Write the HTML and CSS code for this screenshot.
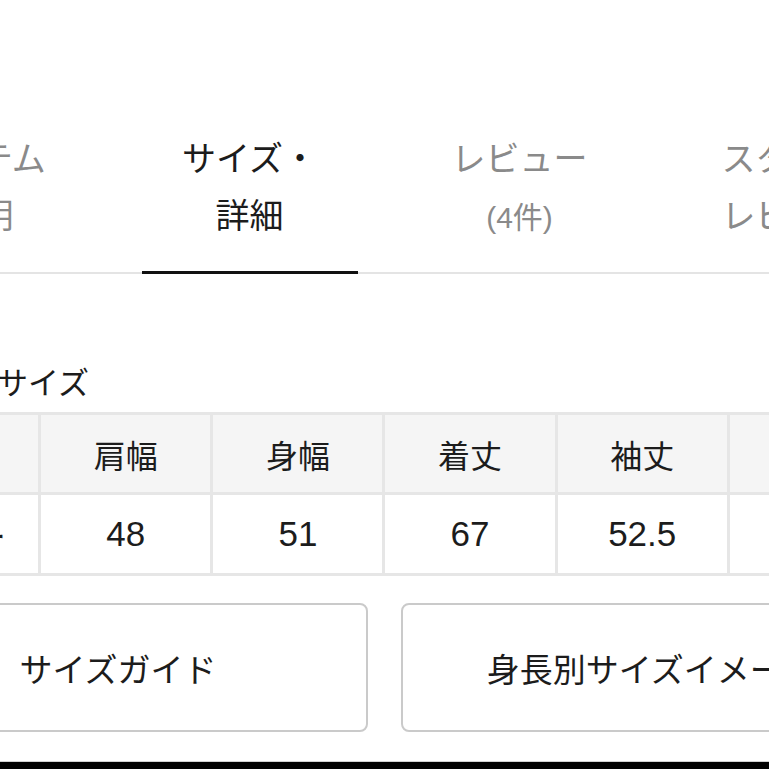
FILE: index.html
```html
<!DOCTYPE html>
<html lang="ja">
<head>
<meta charset="utf-8">
<link rel="stylesheet" href="styles.css">
</head>
<body>
<div class="page">
  <nav class="tabs">
    <div class="tab">アイテム<br>説明</div>
    <div class="tab active">サイズ・<br>詳細</div>
    <div class="tab">レビュー<br><span class="count">(4件)</span></div>
    <div class="tab">スタッフ<br>レビュー</div>
  </nav>
  <main class="content">
    <h2 class="heading">アイテムサイズ</h2>
    <table class="size-table">
      <thead>
        <tr><th>サイズ</th><th>肩幅</th><th>身幅</th><th>着丈</th><th>袖丈</th><th>裄丈</th></tr>
      </thead>
      <tbody>
        <tr><td>フリー</td><td>48</td><td>51</td><td>67</td><td>52.5</td><td>76</td></tr>
      </tbody>
    </table>
    <div class="buttons">
      <a class="btn">サイズガイド</a>
      <a class="btn">身長別サイズイメージ</a>
    </div>
  </main>
  <div class="bottom-bar"></div>
</div>
</body>
</html>
```

FILE: styles.css
```css
html, body {
  margin: 0;
  padding: 0;
  background: #ffffff;
}
body {
  width: 769px;
  height: 769px;
  overflow: hidden;
  font-family: "Liberation Sans", "Noto Sans CJK JP", sans-serif;
  color: #1c1c1c;
}
.page {
  width: 769px;
  display: flex;
  flex-direction: column;
  align-items: center;
}
.tabs {
  display: flex;
  flex: 0 0 auto;
  width: 1080px;
  margin: 0 -156px;
  border-bottom: 2px solid #e4e4e4;
}
.tab {
  flex: 0 0 216px;
  margin: 0 27px -2px;
  padding: 131px 0 25px;
  text-align: center;
  font-size: 34px;
  line-height: 57px;
  color: #8a8a8a;
  border-bottom: 3px solid transparent;
  white-space: nowrap;
}
.tab.active {
  color: #1c1c1c;
  border-bottom-color: #111111;
}
.count {
  font-size: 30px;
}
.content {
  flex: 0 0 auto;
  width: 1033px;
  margin: 0 -132px;
}
.heading {
  margin: 90px 0 8px;
  padding-left: 8px;
  font-size: 31px;
  line-height: 40px;
  font-weight: normal;
  color: #1c1c1c;
}
.size-table {
  width: 1036px;
  margin-left: -2px;
  table-layout: fixed;
  border-collapse: collapse;
}
.size-table th,
.size-table td {
  border: 3px solid #e6e6e6;
  text-align: center;
  font-weight: normal;
  color: #1c1c1c;
  padding: 0;
}
.size-table th {
  height: 77px;
  font-size: 32px;
  background: #f5f5f5;
}
.size-table td {
  height: 78px;
  font-size: 35px;
  background: #ffffff;
}
.buttons {
  display: flex;
  gap: 33px;
  margin-top: 27px;
}
.btn {
  flex: 0 0 496px;
  height: 125px;
  border: 2px solid #cacaca;
  border-radius: 8px;
  display: flex;
  align-items: center;
  justify-content: center;
  font-size: 33px;
  color: #1c1c1c;
  white-space: nowrap;
}
.bottom-bar {
  flex: 0 0 auto;
  width: 769px;
  height: 20px;
  margin-top: 29px;
  border-top: 1px solid #d0d0d0;
  background: #000000;
}
```
